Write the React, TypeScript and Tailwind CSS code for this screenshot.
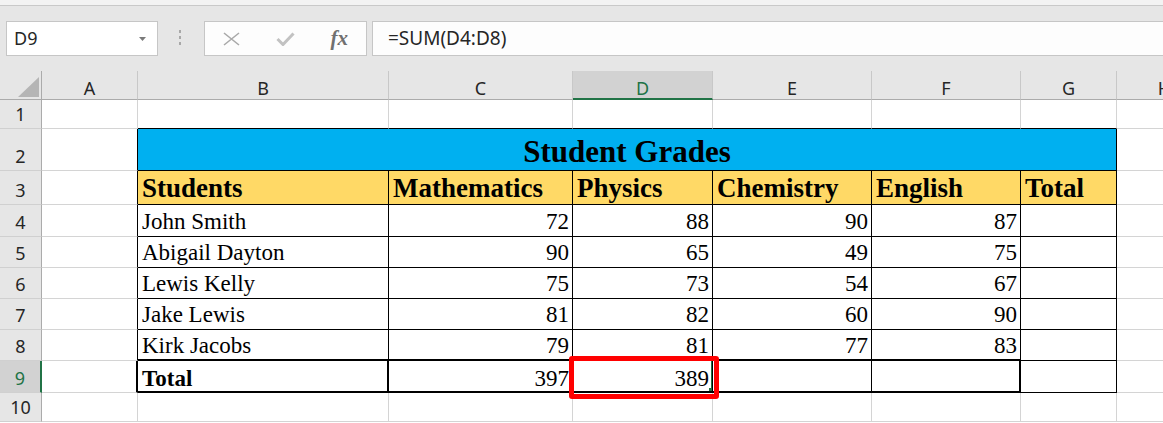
import React from 'react';

const serif = "font-['Liberation_Serif','Times_New_Roman',serif]";
const gridLine = 'border-r border-b border-[#d4d4d4]';
const colHead =
  'items-end justify-center pb-[2px] leading-none border-r border-b border-r-[#c8c8c8] border-b-[#ababab] bg-[#e6e6e6] text-[18px] text-[#262626]';
const rowHead =
  'items-end justify-center pb-[5px] leading-none border-r border-b border-r-[#ababab] border-b-[#d0d0d0] bg-[#e6e6e6] text-[18px] text-[#262626]';
const leftOfTable = 'border-r border-b border-r-black border-b-[#d4d4d4]';
const aboveTable = 'border-r border-b border-r-[#d4d4d4] border-b-black';
const headCell = `${serif} items-end pl-[4px] pb-[2px] text-[27px] font-bold leading-none text-black bg-[#ffd966] border-r border-b border-black`;

const students: [string, number, number, number, number][] = [
  ['John Smith', 72, 88, 90, 87],
  ['Abigail Dayton', 90, 65, 49, 75],
  ['Lewis Kelly', 75, 73, 54, 67],
  ['Jake Lewis', 81, 82, 60, 90],
  ['Kirk Jacobs', 79, 81, 77, 83],
];

interface CellProps {
  className?: string;
  children?: React.ReactNode;
}

const Cell: React.FC<CellProps> = ({ className = '', children }) => (
  <div className={`flex min-w-0 overflow-hidden whitespace-nowrap ${className}`}>{children}</div>
);

const Toolbar: React.FC = () => (
  <div className="h-[71px] bg-[#e6e6e6]">
    <div className="h-[6px] border-b border-[#c9c9c9] bg-[#f3f3f3]" />
    <div className="flex items-start pl-[6px] pt-[15px]">
      <div className="flex h-[35px] w-[152px] shrink-0 items-center justify-between border border-[#c6c6c6] bg-white pl-[7px] pr-[11px] text-[18px] text-[#262626]">
        <span>D9</span>
        <svg width="7" height="4" viewBox="0 0 7 4">
          <polygon points="0,0 7,0 3.5,4" fill="#7a7a7a" />
        </svg>
      </div>
      <div className="ml-[21px] flex shrink-0 flex-col gap-[3px] pt-[9px]">
        <div className="h-[3px] w-[2px] bg-[#a8a8a8]" />
        <div className="h-[3px] w-[2px] bg-[#a8a8a8]" />
        <div className="h-[3px] w-[2px] bg-[#a8a8a8]" />
      </div>
      <div className="ml-[23px] flex h-[35px] w-[163px] shrink-0 items-center border border-[#c6c6c6] bg-[#fdfdfd]">
        <div className="flex w-[54px] justify-center">
          <svg width="17" height="14" viewBox="0 0 17 14">
            <path d="M1 1 L16 13 M16 1 L1 13" stroke="#a9a9a9" strokeWidth="1.6" fill="none" />
          </svg>
        </div>
        <div className="flex w-[54px] justify-center">
          <svg width="19" height="14" viewBox="0 0 19 14">
            <path d="M1.5 7 L7 12.5 L17.5 1.5" stroke="#c2c2c2" strokeWidth="3" fill="none" />
          </svg>
        </div>
        <div className="flex w-[54px] justify-center">
          <span className={`${serif} text-[21px] font-bold italic leading-none text-[#707070]`}>fx</span>
        </div>
      </div>
      <div className="ml-[5px] flex h-[35px] w-[900px] shrink-0 items-center border border-[#c6c6c6] bg-[#fdfdfd] pl-[15px] text-[19px] text-[#262626]">
        =SUM(D4:D8)
      </div>
    </div>
  </div>
);

export default function App() {
  return (
    <div className="relative h-[423px] w-[1163px] overflow-hidden bg-white font-['Noto_Sans','Open_Sans',sans-serif]">
      <Toolbar />
      <div className="grid w-[1213px] grid-cols-[42px_96px_251px_184px_140px_159px_149px_96px_96px] grid-rows-[29px_29px_42px_34px_32px_31px_31px_31px_31px_32px_29px]">
        {/* column header row */}
        <Cell className="items-end justify-end border-r border-b border-[#ababab] bg-[#e6e6e6] pb-[2px] pr-[2px]">
          <svg width="21" height="20" viewBox="0 0 21 20">
            <polygon points="21,0 21,20 0,20" fill="#b5b5b5" />
          </svg>
        </Cell>
        <Cell className={colHead}>A</Cell>
        <Cell className={colHead}>B</Cell>
        <Cell className={colHead}>C</Cell>
        <Cell className="items-end justify-center pb-[1px] leading-none border-r border-b-2 border-r-[#c8c8c8] border-b-[#217346] bg-[#d2d2d2] text-[18px] text-[#217346]">
          D
        </Cell>
        <Cell className={colHead}>E</Cell>
        <Cell className={colHead}>F</Cell>
        <Cell className={colHead}>G</Cell>
        <Cell className={colHead}>H</Cell>

        {/* row 1 */}
        <Cell className={rowHead}>1</Cell>
        <Cell className={gridLine} />
        <Cell className={aboveTable} />
        <Cell className={aboveTable} />
        <Cell className={aboveTable} />
        <Cell className={aboveTable} />
        <Cell className={aboveTable} />
        <Cell className={aboveTable} />
        <Cell className={gridLine} />

        {/* row 2 */}
        <Cell className={rowHead}>2</Cell>
        <Cell className={leftOfTable} />
        <Cell
          className={`${serif} col-span-6 items-end justify-center border-r border-b border-black bg-[#00b0f0] pb-[3px] text-[31px] font-bold leading-none text-black`}
        >
          Student Grades
        </Cell>
        <Cell className={gridLine} />

        {/* row 3 */}
        <Cell className={rowHead}>3</Cell>
        <Cell className={leftOfTable} />
        <Cell className={headCell}>Students</Cell>
        <Cell className={headCell}>Mathematics</Cell>
        <Cell className={headCell}>Physics</Cell>
        <Cell className={headCell}>Chemistry</Cell>
        <Cell className={headCell}>English</Cell>
        <Cell className={headCell}>Total</Cell>
        <Cell className={gridLine} />

        {/* rows 4-8 */}
        {students.map(([name, m, p, c, e], i) => {
          const last = i === students.length - 1;
          const edge = last ? 'border-r border-b-2 border-black pb-[2px]' : 'border-r border-b border-black pb-[3px]';
          const num = `${serif} items-end justify-end pr-[3px] text-[23px] leading-none text-black ${edge}`;
          return (
            <React.Fragment key={name}>
              <Cell className={rowHead}>{i + 4}</Cell>
              <Cell className={leftOfTable} />
              <Cell className={`${serif} items-end pl-[4px] text-[23px] leading-none text-black ${edge}`}>{name}</Cell>
              <Cell className={num}>{m}</Cell>
              <Cell className={num}>{p}</Cell>
              <Cell className={num}>{c}</Cell>
              <Cell className={num}>{e}</Cell>
              <Cell className="border-r border-b border-black" />
              <Cell className={gridLine} />
            </React.Fragment>
          );
        })}

        {/* row 9 */}
        <Cell className="items-end justify-center pb-[5px] leading-none border-r-2 border-b border-r-[#217346] border-b-[#d0d0d0] bg-[#d2d2d2] text-[18px] text-[#217346]">
          9
        </Cell>
        <Cell className="border-r-2 border-b border-r-black border-b-[#d4d4d4]" />
        <Cell className={`${serif} items-end pl-[4px] pb-[1px] text-[23px] font-bold leading-none text-black border-r-2 border-b-2 border-black`}>
          Total
        </Cell>
        <Cell className={`${serif} items-end justify-end pr-[3px] pb-[1px] text-[23px] leading-none text-black border-r border-b-2 border-black`}>
          397
        </Cell>
        <Cell className={`${serif} relative items-end justify-end pr-[3px] pb-[1px] text-[23px] leading-none text-black border-r border-b-2 border-black`}>
          389
          <div className="absolute -top-[2px] -left-[2px] -right-[1px] -bottom-[2px] border-2 border-[#217346]" />
          <div className="absolute -right-[2px] -bottom-[2px] h-[5px] w-[5px] bg-[#217346]" />
        </Cell>
        <Cell className="border-r border-b-2 border-black" />
        <Cell className="border-r-2 border-b-2 border-black" />
        <Cell className="border-r border-b border-black" />
        <Cell className={gridLine} />

        {/* row 10 */}
        <Cell className={rowHead}>10</Cell>
        <Cell className={gridLine} />
        <Cell className={gridLine} />
        <Cell className={gridLine} />
        <Cell className={gridLine} />
        <Cell className={gridLine} />
        <Cell className={gridLine} />
        <Cell className={gridLine} />
        <Cell className={gridLine} />
      </div>

      {/* annotation around D9 */}
      <div className="pointer-events-none absolute left-[569px] top-[356px] h-[43px] w-[150px] rounded-[3px] border-[5px] border-[#ff0000]" />
    </div>
  );
}
